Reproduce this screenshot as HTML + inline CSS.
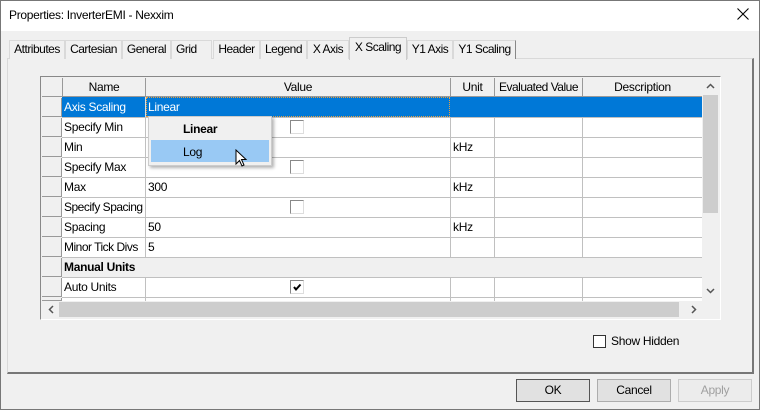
<!DOCTYPE html><html><head><style>
*{margin:0;padding:0;box-sizing:border-box}
body{width:760px;height:410px;background:#f0f0f0;font-family:"Liberation Sans",sans-serif;font-size:12px;letter-spacing:-0.3px;color:#000;position:relative;overflow:hidden}
.a{position:absolute}
.tab{position:absolute;top:40px;height:19px;border:1px solid #d9d9d9;border-bottom:none;background:#f0f0f0;text-align:center;line-height:17px;font-size:12px;letter-spacing:-0.5px;white-space:nowrap;overflow:hidden}
.c{position:absolute;white-space:nowrap;line-height:20px;padding-left:2px}
.hl{position:absolute;height:1px;background:#c0c0c0}
.vl{position:absolute;width:1px;background:#c0c0c0}
.cb{position:absolute;width:14px;height:14px;background:#fff;border:1px solid #888;border-right-color:#ddd;border-bottom-color:#ddd}
.rh{position:absolute;left:42px;width:20px;height:19px;background:#f0f0f0;border-right:1px solid #999;border-bottom:1px solid #999}
.btn{position:absolute;top:379px;width:74px;height:23px;border:1px solid #adadad;background:#e1e1e1;text-align:center;line-height:21px}
</style></head><body>
<div class="a" style="left:0;top:0;width:760px;height:31px;background:#fff"></div>
<div class="a" style="left:9px;top:8px;font-size:12px">Properties: InverterEMI - Nexxim</div>
<svg class="a" style="left:737px;top:8px" width="12" height="12"><path d="M0.5 0.5 L11.5 11.5 M11.5 0.5 L0.5 11.5" stroke="#000" stroke-width="1.1"/></svg>
<div class="a" style="left:0;top:0;width:760px;height:410px;border:1px solid #777"></div>
<div class="a" style="left:7px;top:58px;width:747px;height:316px;border:1px solid #d9d9d9;border-right:2px solid #777;border-bottom:2px solid #777"></div>
<div class="tab" style="left:9px;width:56px">Attributes</div>
<div class="tab" style="left:65px;width:57px">Cartesian</div>
<div class="tab" style="left:122px;width:49px">General</div>
<div class="tab" style="left:171px;width:41px;text-align:left;padding-left:4px">Grid</div>
<div class="tab" style="left:213px;width:47px">Header</div>
<div class="tab" style="left:260px;width:47px">Legend</div>
<div class="tab" style="left:307px;width:42px">X Axis</div>
<div class="tab" style="left:349px;top:37px;width:58px;height:23px;background:#f0f0f0;border-color:#ccc;line-height:19px;z-index:2">X Scaling</div>
<div class="tab" style="left:407px;width:46px">Y1 Axis</div>
<div class="tab" style="left:453px;width:63px;border-right:1px solid #888">Y1 Scaling</div>
<div class="a" style="left:40px;top:76px;width:681px;height:244px;border:1px solid #888;border-right-color:#fff;border-bottom-color:#fff;background:#f0f0f0"></div>
<div class="a" style="left:62px;top:97px;width:640px;height:204px;background:#fff"></div>
<div class="a" style="left:42px;top:78px;width:660px;height:19px;background:#f0f0f0;border-bottom:1px solid #999"></div>
<div class="a" style="left:62px;top:78px;width:84px;height:19px;border-left:1px solid #999;border-right:1px solid #999;text-align:center;line-height:18px">Name</div>
<div class="a" style="left:146px;top:78px;width:305px;height:19px;border-right:1px solid #999;text-align:center;line-height:18px">Value</div>
<div class="a" style="left:451px;top:78px;width:44px;height:19px;border-right:1px solid #999;text-align:center;line-height:18px">Unit</div>
<div class="a" style="left:495px;top:78px;width:88px;height:19px;border-right:1px solid #999;text-align:center;line-height:18px;letter-spacing:-0.5px">Evaluated Value</div>
<div class="a" style="left:583px;top:78px;width:119px;height:19px;text-align:center;line-height:18px">Description</div>
<div class="rh" style="top:98px"></div><div class="rh" style="top:118px"></div><div class="rh" style="top:138px"></div><div class="rh" style="top:158px"></div><div class="rh" style="top:178px"></div><div class="rh" style="top:198px"></div><div class="rh" style="top:218px"></div><div class="rh" style="top:238px"></div><div class="rh" style="top:258px"></div><div class="rh" style="top:278px"></div><div class="rh" style="top:298px;height:3px"></div>
<div class="a" style="left:62px;top:97px;width:640px;height:20px;background:#0078d7"></div>
<div class="a" style="left:146px;top:97px;width:304px;height:20px;border:1px dotted #e8a040"></div>
<div class="a" style="left:62px;top:257px;width:640px;height:20px;background:#f0f0f0"></div>
<div class="hl" style="left:62px;top:117px;width:640px"></div><div class="hl" style="left:62px;top:137px;width:640px"></div><div class="hl" style="left:62px;top:157px;width:640px"></div><div class="hl" style="left:62px;top:177px;width:640px"></div><div class="hl" style="left:62px;top:197px;width:640px"></div><div class="hl" style="left:62px;top:217px;width:640px"></div><div class="hl" style="left:62px;top:237px;width:640px"></div><div class="hl" style="left:62px;top:257px;width:640px"></div><div class="hl" style="left:62px;top:277px;width:640px"></div><div class="hl" style="left:62px;top:297px;width:640px"></div>
<div class="vl" style="left:145px;top:117px;height:140px"></div><div class="vl" style="left:450px;top:117px;height:140px"></div><div class="vl" style="left:494px;top:117px;height:140px"></div><div class="vl" style="left:582px;top:117px;height:140px"></div>
<div class="vl" style="left:145px;top:277px;height:24px"></div><div class="vl" style="left:450px;top:277px;height:24px"></div><div class="vl" style="left:494px;top:277px;height:24px"></div><div class="vl" style="left:582px;top:277px;height:24px"></div>
<div class="vl" style="left:145px;top:97px;height:20px;background:#ddd"></div>
<div class="c" style="left:62px;top:97px;color:#fff">Axis Scaling</div>
<div class="c" style="left:146px;top:97px;color:#fff">Linear</div>
<div class="c" style="left:62px;top:117px">Specify Min</div>
<div class="c" style="left:62px;top:137px">Min</div>
<div class="c" style="left:62px;top:157px">Specify Max</div>
<div class="c" style="left:62px;top:177px">Max</div>
<div class="c" style="left:62px;top:197px;letter-spacing:-0.5px">Specify Spacing</div>
<div class="c" style="left:62px;top:217px">Spacing</div>
<div class="c" style="left:62px;top:237px;letter-spacing:-0.5px">Minor Tick Divs</div>
<div class="c" style="left:62px;top:257px;font-weight:bold">Manual Units</div>
<div class="c" style="left:62px;top:277px">Auto Units</div>
<div class="c" style="left:146px;top:177px">300</div>
<div class="c" style="left:146px;top:217px">50</div>
<div class="c" style="left:146px;top:237px">5</div>
<div class="c" style="left:451px;top:137px">kHz</div>
<div class="c" style="left:451px;top:177px">kHz</div>
<div class="c" style="left:451px;top:217px">kHz</div>
<div class="cb" style="left:290px;top:120px"></div>
<div class="cb" style="left:290px;top:160px"></div>
<div class="cb" style="left:290px;top:200px"></div>
<div class="cb" style="left:290px;top:280px"><svg width="12" height="12" style="position:absolute;left:0;top:0"><path d="M3 6 L5 8.5 L9.5 3.5" stroke="#000" stroke-width="2" fill="none"/></svg></div>
<div class="a" style="left:702px;top:78px;width:17px;height:223px;background:#f0f0f0"></div>
<div class="a" style="left:703px;top:95px;width:15px;height:118px;background:#cdcdcd"></div>
<svg class="a" style="left:706px;top:83px" width="9" height="6"><path d="M1 5 L4.5 1.5 L8 5" stroke="#555" stroke-width="1.5" fill="none"/></svg>
<svg class="a" style="left:706px;top:288px" width="9" height="6"><path d="M1 1 L4.5 4.5 L8 1" stroke="#555" stroke-width="1.5" fill="none"/></svg>
<div class="a" style="left:42px;top:301px;width:660px;height:17px;background:#f0f0f0"></div>
<div class="a" style="left:59px;top:302px;width:620px;height:15px;background:#cdcdcd"></div>
<svg class="a" style="left:48px;top:305px" width="6" height="9"><path d="M5 1 L1.5 4.5 L5 8" stroke="#555" stroke-width="1.5" fill="none"/></svg>
<svg class="a" style="left:691px;top:305px" width="6" height="9"><path d="M1 1 L4.5 4.5 L1 8" stroke="#555" stroke-width="1.5" fill="none"/></svg>
<div class="a" style="left:148px;top:116px;width:124px;height:50px;background:#f0f0f0;border:1px solid #ccc;box-shadow:2px 2px 3px rgba(0,0,0,.3)"></div>
<div class="a" style="left:183px;top:122px;font-weight:bold">Linear</div>
<div class="a" style="left:151px;top:140px;width:118px;height:22px;background:#99c9f4"></div>
<div class="a" style="left:183px;top:145px">Log</div>
<svg class="a" style="left:235px;top:149px" width="14" height="20"><path d="M1 1 L1 15 L4.5 11.5 L7 17 L9 16 L6.5 10.5 L11 10.5 Z" fill="#fff" stroke="#000" stroke-width="1"/></svg>
<div class="cb" style="left:593px;top:335px;width:13px;height:13px;border:1px solid #333"></div>
<div class="a" style="left:611px;top:334px">Show Hidden</div>
<div class="btn" style="left:516px;border:1px solid #555">OK</div>
<div class="btn" style="left:597px">Cancel</div>
<div class="btn" style="left:678px;color:#a0a0a0;background:#ececec;border-color:#ccc">Apply</div>
</body></html>
